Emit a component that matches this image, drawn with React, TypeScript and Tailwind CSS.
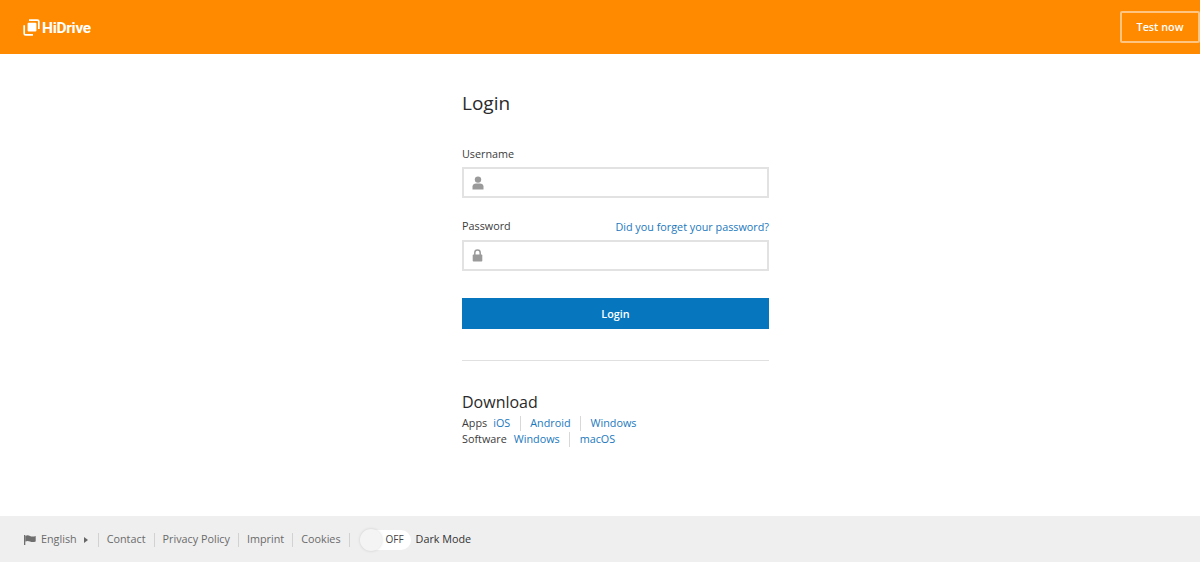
import React from "react";

const User = () => (
  <svg width="12" height="14" viewBox="0 0 12 14" fill="#9a9a9a"><circle cx="6" cy="3.6" r="3.2" /><path d="M0.5 13.5V10.6C0.5 8.6 2.2 7.4 4 7.4h4c1.8 0 3.5 1.2 3.5 3.2v2.9z" /></svg>
);
const Lock = () => (
  <svg width="11" height="13" viewBox="0 0 11 13" fill="none"><path d="M2.8 6V3.8a2.7 2.7 0 0 1 5.4 0V6" stroke="#9a9a9a" strokeWidth="1.5" /><rect x="0.7" y="5.6" width="9.6" height="7" rx="0.8" fill="#9a9a9a" /></svg>
);
const Flag = () => (
  <svg width="12" height="10" viewBox="0 0 12 10" fill="#6f6f6f"><rect x="0" y="0" width="1.3" height="10" /><path d="M1.3 1C3 0 4.5 0.2 6 0.9s3.4.7 5.7 0v5.6c-2.3.8-4 .7-5.7 0S3 5.6 1.3 6.5z" /></svg>
);
const Logo = () => (
  <svg width="17" height="17" viewBox="0 0 17 17" fill="none">
    <path d="M6 1.2h8.4a1.4 1.4 0 0 1 1.4 1.4V10" stroke="#fff" strokeWidth="1.7" />
    <rect x="4.6" y="3.8" width="8.8" height="8.8" rx="1" fill="#fff" />
    <path d="M1.2 6.2v8.2a1.4 1.4 0 0 0 1.4 1.4H10" stroke="#fff" strokeWidth="1.7" />
  </svg>
);
const Sep = () => <span className="mx-[9.5px] inline-block h-[15px] w-px bg-[#d8d8d8]" />;
const FSep = () => <span className="mx-[8px] inline-block h-[14px] w-px bg-[#d2d2d2]" />;
const A = ({ children }: { children: React.ReactNode }) => <a className="text-[#1a78bd]">{children}</a>;

export default function App() {
  return (
    <div className="flex h-[562px] flex-col bg-white text-[10.8px] text-[#3b3b3b] [font-family:'Open_Sans',sans-serif]">
      <header className="flex h-[54px] items-center justify-between bg-[#ff8a00] pl-[23px]">
        <div className="flex items-center gap-[2px]">
          <Logo />
          <span className="pt-[3px] text-[15.5px] font-bold tracking-[-0.3px] text-white [font-family:'Roboto',sans-serif]">HiDrive</span>
        </div>
        <a className="flex h-[32px] w-[80px] items-center justify-center rounded-[2px] border-2 border-[#ffc480] text-[10.8px] font-semibold text-white">Test now</a>
      </header>

      <main className="flex flex-1 justify-center pl-[31px]">
        <div className="w-[307px] pt-[35px]">
          <h1 className="text-[19px] leading-[28px] font-normal text-[#2a2a2a]">Login</h1>
          <div className="mt-[29px] leading-[16px]">Username</div>
          <div className="mt-[5px] flex h-[31px] items-center border-2 border-[#e2e2e2] pl-[8px]"><User /></div>
          <div className="mt-[20px] flex h-[16px] items-center justify-between">
            <span>Password</span>
            <span className="pt-[2px]"><A>Did you forget your password?</A></span>
          </div>
          <div className="mt-[6px] flex h-[31px] items-center border-2 border-[#e2e2e2] pl-[8px]"><Lock /></div>
          <button className="mt-[27px] block h-[31px] w-full bg-[#0677bf] pt-[1px] text-[10.8px] font-semibold text-white">Login</button>
          <div className="mt-[31px] h-px bg-[#e0e0e0]" />
          <h2 className="mt-[30px] text-[16px] leading-[22px] font-medium text-[#2a2a2a]">Download</h2>
          <div className="mt-[2px] flex h-[16px] items-center">
            <span className="mr-[6px]">Apps</span><A>iOS</A><Sep /><A>Android</A><Sep /><A>Windows</A>
          </div>
          <div className="flex h-[16px] items-center">
            <span className="mr-[7px]">Software</span><A>Windows</A><Sep /><A>macOS</A>
          </div>
        </div>
      </main>

      <footer className="flex h-[46px] items-center bg-[#efefef] pl-[24px] pt-[1px] text-[#6a6a6a]">
        <Flag />
        <span className="ml-[5px]">English</span>
        <span className="ml-[7px] mr-[2px] h-0 w-0 border-y-[3.5px] border-l-[4px] border-y-transparent border-l-[#666]" />
        <FSep /><span>Contact</span><FSep /><span>Privacy Policy</span><FSep /><span>Imprint</span><FSep /><span>Cookies</span><FSep />
        <div className="relative ml-[2px] flex h-[20px] w-[51px] items-center justify-end rounded-full bg-white pr-[7px] text-[10px] font-medium text-[#444]">
          OFF
          <span className="absolute top-[-1px] left-0 h-[22px] w-[22px] rounded-full bg-[#f4f4f4] shadow-[0_0_3px_rgba(0,0,0,0.15)]" />
        </div>
        <span className="ml-[5px] text-[#333]">Dark Mode</span>
      </footer>
    </div>
  );
}
